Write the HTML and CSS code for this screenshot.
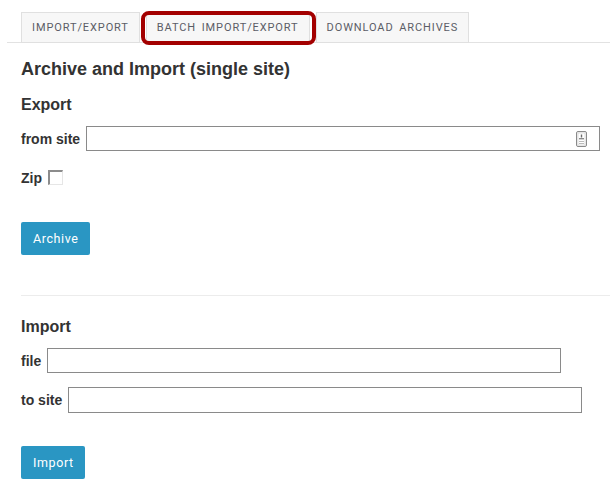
FILE: index.html
```html
<!DOCTYPE html>
<html>
<head>
<meta charset="utf-8">
<link rel="stylesheet" href="styles.css">
</head>
<body>
<ul class="tabs">
  <li class="tab">IMPORT/EXPORT</li>
  <li class="tab tab-marked">BATCH IMPORT/EXPORT</li>
  <li class="tab">DOWNLOAD ARCHIVES</li>
</ul>
<div class="content">
  <h2 class="title">Archive and Import (single site)</h2>
  <h3 class="section">Export</h3>
  <div class="row row-from">
    <label class="lbl">from site</label>
    <div class="field">
      <input class="text" type="text">
      <svg class="autofill" width="11" height="16" viewBox="0 0 11 16">
        <rect x="0.5" y="0.5" width="10" height="15" rx="1.5" fill="#f2f2f2" stroke="#8a8a8a"/>
        <rect x="2" y="2" width="7" height="12" fill="#fff" stroke="#c8c8c8" stroke-width="0.6"/>
        <rect x="4.8" y="3.5" width="1.4" height="3" fill="#6a6a6a"/>
        <rect x="3" y="7" width="5" height="1.4" fill="#8a8a8a"/>
        <rect x="3" y="10" width="5" height="1" fill="#bbb"/>
        <rect x="3" y="12" width="5" height="1" fill="#bbb"/>
      </svg>
    </div>
  </div>
  <div class="row row-zip">
    <label class="lbl">Zip</label>
    <input class="check" type="checkbox">
  </div>
  <button class="btn btn-archive">Archive</button>
  <hr class="sep">
  <h3 class="section section-import">Import</h3>
  <div class="row row-file">
    <label class="lbl">file</label>
    <input class="text" type="text">
  </div>
  <div class="row row-to">
    <label class="lbl">to site</label>
    <input class="text" type="text">
  </div>
  <button class="btn btn-import">Import</button>
</div>
</body>
</html>
```

FILE: styles.css
```css
html, body {
  margin: 0;
  padding: 0;
  background: #fff;
}
body {
  font-family: "Liberation Sans", Arial, sans-serif;
  color: #333;
}
.tabs {
  list-style: none;
  margin: 12px 0 0 7px;
  padding: 0 0 0 14px;
  display: flex;
  gap: 2px;
  border-bottom: 1px solid #e2e2e2;
  height: 30px;
}
.tab {
  position: relative;
  box-sizing: border-box;
  height: 31px;
  padding: 0 10px;
  border: 1px solid #e0e0e0;
  background: #f7f7f7;
  font-family: Roboto, "Liberation Sans", sans-serif;
  font-size: 11px;
  letter-spacing: 0.9px;
  word-spacing: 2px;
  color: #5b5d66;
  line-height: 29px;
  white-space: nowrap;
}
.tab-marked {
  margin: 0 4px 0 4px;
}
.tab-marked::after {
  content: "";
  position: absolute;
  left: -6px;
  right: -7px;
  top: -2px;
  bottom: -3px;
  border: 4px solid #a30000;
  border-radius: 8px;
}
.content {
  padding-left: 21px;
}
.title {
  margin: 16px 0 0;
  font-size: 18px;
  line-height: 21px;
  font-weight: bold;
}
.section {
  margin: 16px 0 0;
  font-size: 16px;
  line-height: 18px;
  font-weight: bold;
}
.section-import {
  margin-top: 22px;
}
.row {
  display: flex;
  align-items: center;
  gap: 6px;
}
.lbl {
  font-size: 14px;
  line-height: 16px;
  font-weight: bold;
  color: #333;
}
.row-from {
  margin-top: 12px;
  height: 25px;
}
.field {
  position: relative;
  display: flex;
}
.text {
  display: block;
  box-sizing: border-box;
  width: 514px;
  height: 25px;
  margin: 0;
  border: 1px solid #8a8a8a;
  background: #fff;
  padding: 0 4px;
}
.autofill {
  position: absolute;
  right: 13px;
  top: 5px;
}
.row-zip {
  margin-top: 19px;
  height: 15px;
}
.check {
  display: block;
  appearance: none;
  -webkit-appearance: none;
  box-sizing: border-box;
  width: 15px;
  height: 15px;
  margin: 0;
  border-style: solid;
  border-width: 2px 1px 1px 2px;
  border-color: #8c8c8c #e6e6e6 #e6e6e6 #8c8c8c;
  background: #fff;
}
.btn {
  display: block;
  box-sizing: border-box;
  height: 33px;
  padding: 0 12px;
  border: none;
  border-radius: 2px;
  background: #2a96c3;
  color: #fff;
  font-family: Roboto, "Liberation Sans", sans-serif;
  font-size: 12.5px;
  letter-spacing: 0.6px;
}
.btn-archive {
  margin-top: 37px;
  width: 69px;
}
.btn-import {
  margin-top: 33px;
  width: 64px;
}
.sep {
  margin: 40px 0 0;
  border: none;
  border-top: 1px solid #ececec;
  height: 0;
}
.row-file {
  margin-top: 12px;
  height: 25px;
}
.row-to {
  margin-top: 14px;
  height: 26px;
}
.row-to .text {
  height: 26px;
}
```
